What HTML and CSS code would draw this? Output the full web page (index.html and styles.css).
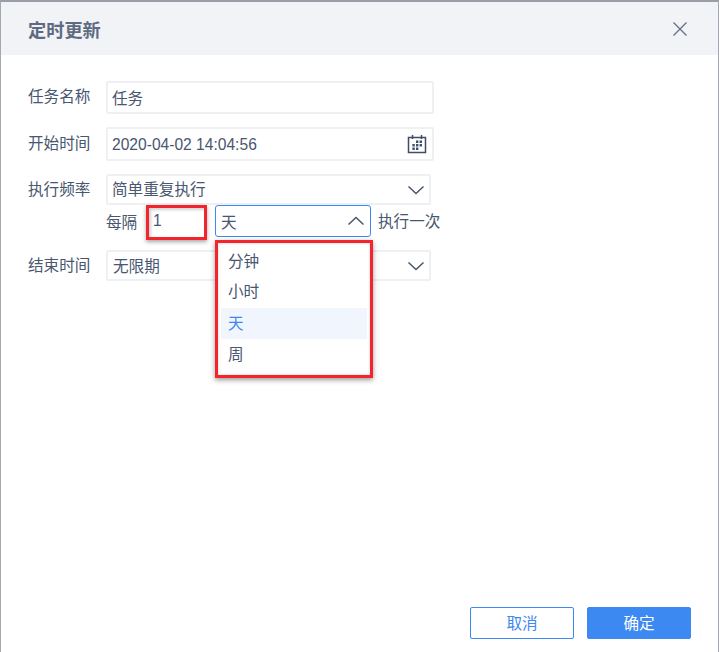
FILE: index.html
```html
<!DOCTYPE html>
<html lang="zh">
<head>
<meta charset="utf-8">
<title>定时更新</title>
<link rel="stylesheet" href="styles.css">
</head>
<body>
<div class="dialog">
  <header class="head">
    <h1 class="title">定时更新</h1>
    <svg class="close" width="16" height="16" viewBox="0 0 16 16"><path d="M1.5 1.5l13 13M14.5 1.5l-13 13" fill="none" stroke="#667085" stroke-width="1.4"/></svg>
  </header>
  <main class="form">
    <div class="row row-name">
      <span class="label">任务名称</span>
      <div class="field wide"><span class="val">任务</span></div>
    </div>
    <div class="row row-start">
      <span class="label">开始时间</span>
      <div class="field wide date"><span class="val-date">2020-04-02 14:04:56</span>
        <svg width="20" height="20" viewBox="0 0 20 20" fill="none"><path d="M1.5 3.5h17v15h-17z" stroke="#3f4d66" stroke-width="1.5"/><path d="M5.5 1v4M14.5 1v4" stroke="#3f4d66" stroke-width="1.5"/><path d="M9 6.5h2.4v2.4H9zM12.6 6.5H15v2.4h-2.4zM5.4 10h2.4v2.4H5.4zM9 10h2.4v2.4H9zM12.6 10H15v2.4h-2.4zM5.4 13.5h2.4v2.4H5.4zM9 13.5h2.4v2.4H9z" fill="#3f4d66"/></svg>
      </div>
    </div>
    <div class="row row-freq">
      <span class="label">执行频率</span>
      <div class="field select"><span class="val">简单重复执行</span>
        <svg class="chev" width="18" height="10" viewBox="0 0 18 10"><path d="M1.5 1.5L9 8.5l7.5-7" fill="none" stroke="#48566f" stroke-width="1.5"/></svg>
      </div>
    </div>
    <div class="sub">
      <span class="sub-text">每隔</span>
      <span class="num">1</span>
      <div class="unit-wrap">
        <div class="field unit">天
          <svg class="chev" width="18" height="10" viewBox="0 0 18 10"><path d="M1.5 8.5L9 1.5l7.5 7" fill="none" stroke="#48566f" stroke-width="1.5"/></svg>
        </div>
        <ul class="menu">
          <li class="opt">分钟</li>
          <li class="opt opt-hour">小时</li>
          <li class="opt on">天</li>
          <li class="opt">周</li>
        </ul>
      </div>
      <span class="sub-after">执行一次</span>
    </div>
    <div class="row row-end">
      <span class="label">结束时间</span>
      <div class="field select"><span class="val">无限期</span>
        <svg class="chev" width="18" height="10" viewBox="0 0 18 10"><path d="M1.5 1.5L9 8.5l7.5-7" fill="none" stroke="#48566f" stroke-width="1.5"/></svg>
      </div>
    </div>
  </main>
  <footer class="foot">
    <button class="btn ghost"><span class="btn-text">取消</span></button>
    <button class="btn primary"><span class="btn-text">确定</span></button>
  </footer>
</div>
</body>
</html>
```
FILE: styles.css
```css
* { box-sizing: border-box; }
html, body { margin: 0; height: 100%; }
body {
  background: #fff;
  color: #48566f;
  font-family: "Liberation Sans", "Noto Sans CJK SC", sans-serif;
  font-size: 15.6px;
  overflow: hidden;
}
.dialog {
  height: 652px;
  display: flex;
  flex-direction: column;
  border-top: 2px solid #9a9ea6;
  border-left: 1px solid #a4a8b0;
  border-right: 1px solid #a4a8b0;
}
.head {
  height: 53px;
  background: #f1f3f7;
  display: flex;
  align-items: center;
  justify-content: space-between;
  padding: 0 30px 0 27px;
  flex: none;
}
.title {
  margin: 0;
  font-size: 18.2px;
  font-weight: 700;
  color: #5f6b80;
}
.close { display: block; }
.form {
  flex: 1;
  padding: 26px 0 0 27px;
}
.row {
  display: flex;
  align-items: center;
}
.label { width: 78px; flex: none; position: relative; top: -3px; }
.row-start .label { top: -2px; }
.row-freq .label { top: -2px; }
.row-end .label { top: -2px; }
.field {
  border: 2px solid #eef0f3;
  border-radius: 2px;
  background: #fff;
  display: flex;
  align-items: center;
  justify-content: space-between;
  padding: 0 5px 0 4px;
  height: 100%;
}
.val { position: relative; top: -1px; }
.row-freq .val { top: -2px; }
.row-end .val { left: 1px; }
.val-date { position: relative; top: 1px; }
.row-name { height: 33px; margin-bottom: 13px; }
.row-start { height: 34px; margin-bottom: 13px; }
.row-freq { height: 31px; }
.row-end { height: 31px; margin-top: 13px; }
.wide { width: 328px; }
.select { width: 325px; padding-right: 4px; }
.chev { display: block; }
.sub {
  height: 32px;
  margin-left: 78px;
  display: flex;
  align-items: center;
}
.sub-text { width: 40px; flex: none; }
.num {
  width: 61px;
  height: 35px;
  flex: none;
  margin-right: 8px;
  padding: 2px 0 0 4px;
  align-self: flex-start;
  border: 3px solid #f4242d;
  box-shadow: 0 2px 4px rgba(0,0,0,.35), inset 2px 2px 3px rgba(0,0,0,.18);
  line-height: 22px;
  position: relative;
  z-index: 2;
}
.unit-wrap { position: relative; width: 156px; height: 32px; flex: none; }
.unit {
  border: 1px solid #3d89f2;
  border-radius: 3px;
  padding: 0 5px;
}
.sub-after { margin-left: 7px; position: relative; top: -1px; }
.menu {
  position: absolute;
  left: 0;
  top: 35px;
  width: 158px;
  height: 138px;
  margin: 0;
  padding: 3px 3px 0;
  list-style: none;
  background: #fff;
  border: 3px solid #f4242d;
  box-shadow: 0 2px 5px rgba(0,0,0,.4), inset 0 0 3px rgba(0,0,0,.2);
  z-index: 3;
}
.opt {
  height: 31px;
  line-height: 31px;
  padding-left: 7px;
}
.opt-hour { line-height: 30px; }
.opt.on { background: #f1f6fe; color: #3d89f2; }
.foot {
  flex: none;
  display: flex;
  justify-content: flex-end;
  gap: 13px;
  padding: 0 27px 13px 0;
}
.btn {
  width: 104px;
  height: 32px;
  border-radius: 2px;
  font: inherit;
  padding: 0;
}
.btn-text { position: relative; top: -1px; }
.ghost { background: #fff; border: 1px solid #3d89f2; color: #3d89f2; }
.primary { background: #3d89f2; border: 1px solid #3d89f2; color: #fff; }
```
